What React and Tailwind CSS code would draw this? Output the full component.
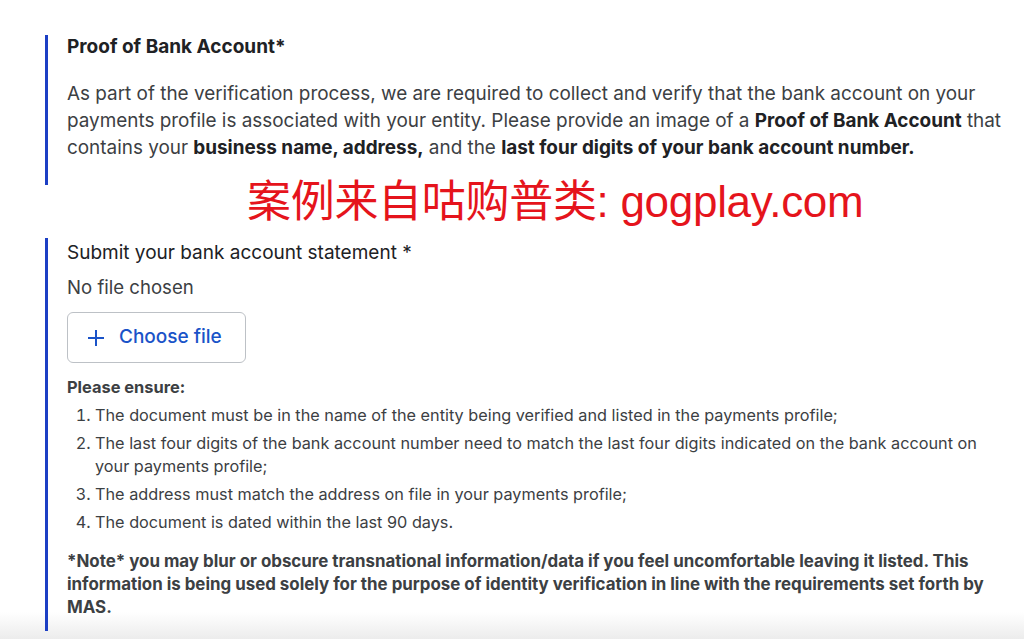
import React from 'react';

const ensureItems = [
  ['The document must be in the name of the entity being verified and listed in the payments profile;'],
  ['The last four digits of the bank account number need to match the last four digits indicated on the bank account on', 'your payments profile;'],
  ['The address must match the address on file in your payments profile;'],
  ['The document is dated within the last 90 days.'],
];

const App = () => {
  return (
    <div className="h-[639px] overflow-hidden bg-[linear-gradient(to_bottom,#ffffff_0px,#ffffff_612px,#ececec_639px)] font-['Inter','Roboto',sans-serif] text-[#202124]">
      <div className="pl-[45px] pt-[35px]">
        {/* proof of bank account */}
        <section className="border-l-[3px] border-[#1c3fc4] pl-[19px] pb-[24px]">
          <h3 className="text-[19px] font-bold leading-[24px]">Proof of Bank Account*</h3>
          <p className="mt-[21px] whitespace-nowrap text-[18.9px] leading-[27px] text-[#3c4043]">
            As part of the verification process, we are required to collect and verify that the bank account on your
            <br />
            payments profile is associated with your entity. Please provide an image of a{' '}
            <b className="font-bold text-[#202124]">Proof of Bank Account</b> that
            <br />
            contains your <b className="font-bold text-[#202124]">business name, address,</b> and the{' '}
            <b className="font-bold text-[#202124]">last four digits of your bank account number.</b>
          </p>
        </section>

        <div className="-mt-[3px] h-[56px] pl-[202px] whitespace-nowrap font-['Liberation_Sans','Noto_Sans_CJK_SC',sans-serif] text-[44px] leading-[40px] tracking-[-0.3px] text-[#e5141c]">
          案例来自咕购普类: gogplay.com
        </div>

        {/* upload */}
        <section className="border-l-[3px] border-[#1c3fc4] pl-[19px] pt-[2px] pb-[12px]">
          <div className="text-[19px] leading-[26px] text-[#202124]">Submit your bank account statement *</div>
          <div className="mt-[8px] text-[18.6px] leading-[26px] text-[#3c4043]">No file chosen</div>
          <button className="mt-[12px] flex h-[51px] w-[179px] items-center gap-[13px] rounded-[6px] border border-[#bdc1c6] pl-[18px] text-[19px] font-medium text-[#1a53c8]">
            <svg width="20" height="20" viewBox="0 0 20 20" fill="none" stroke="currentColor" strokeWidth="2">
              <path d="M10 2v16M2 10h16" />
            </svg>
            Choose file
          </button>

          <div className="mt-[13px] text-[16.4px] font-bold leading-[22px] text-[#3c4043]">Please ensure:</div>
          <ol className="mt-[6px] flex list-decimal flex-col gap-[5px] pl-[28px] text-[16.25px] leading-[23px] text-[#3c4043]">
            {ensureItems.map((lines, i) => (
              <li key={i} className="whitespace-nowrap">
                {lines[0]}
                {lines[1] && (
                  <>
                    <br />
                    {lines[1]}
                  </>
                )}
              </li>
            ))}
          </ol>

          <p className="mt-[16px] whitespace-nowrap text-[16.9px] font-bold leading-[23px] text-[#3c4043]">
            *Note* you may blur or obscure transnational information/data if you feel uncomfortable leaving it listed. This
            <br />
            information is being used solely for the purpose of identity verification in line with the requirements set forth by
            <br />
            MAS.
          </p>
        </section>
      </div>
    </div>
  );
};

export default App;
